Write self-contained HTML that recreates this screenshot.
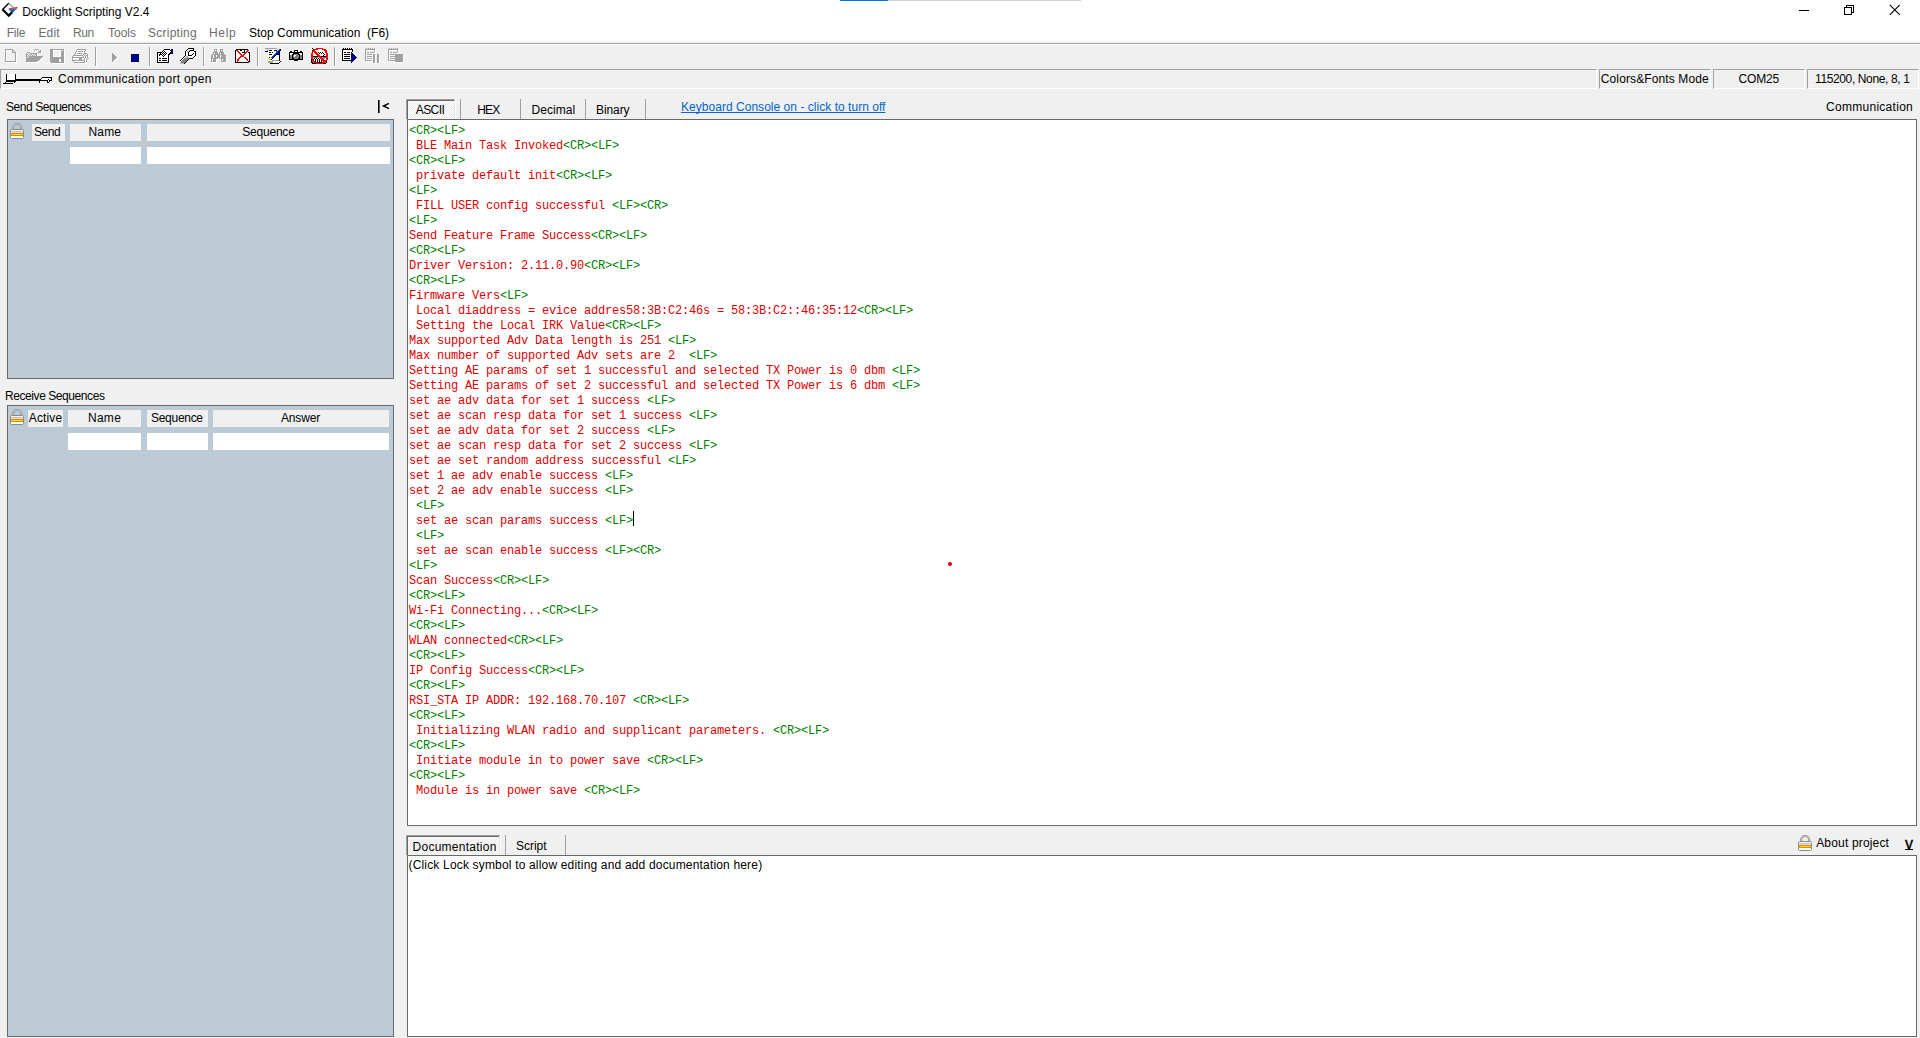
<!DOCTYPE html><html><head><meta charset="utf-8"><style>
*{margin:0;padding:0;box-sizing:border-box}
html,body{width:1920px;height:1038px;overflow:hidden;background:#f0f0f0;font-family:"Liberation Sans",sans-serif;font-size:12px;color:#000}
.a{position:absolute}
.t{position:absolute;white-space:pre;line-height:12px;text-decoration-skip-ink:none}
.menu{color:#6d6d6d}
.sunk{position:absolute;border-top:1px solid #a0a0a0;border-left:1px solid #a0a0a0;border-bottom:1px solid #fff;border-right:1px solid #fff}
.grid{position:absolute;background:#bccad6;border:1px solid #696969}
.hc{position:absolute;background:#f0f0f0}
.wc{position:absolute;background:#fff}
.console{position:absolute;left:409px;top:123.5px;font-family:"Liberation Mono",monospace;font-size:12px;letter-spacing:-0.2px;line-height:15px;white-space:pre}
.g{color:#008000}
.r{color:#e00000}
</style></head><body><div class="a" style="left:0;top:0;width:1920px;height:41px;background:#fff"></div><div class="a" style="left:0;top:41px;width:1920px;height:2px;background:#f3f3f3"></div><div class="a" style="left:0;top:43px;width:1920px;height:1px;background:#a0a0a0"></div><div class="a" style="left:0;top:44px;width:1920px;height:1px;background:#fff"></div><div class="a" style="left:840px;top:0;width:48px;height:1px;background:#0078d7"></div><div class="a" style="left:888px;top:0;width:193px;height:1px;background:#d4d4d4"></div><svg class="a" style="left:0;top:0" width="20" height="18"><path d="M8.7 3.2L2.6 9.5" stroke="#000" stroke-width="1.3" fill="none"/><path d="M2.4 9.3L8.7 15.6L12.2 12.1" stroke="#000" stroke-width="2.2" fill="none"/><path d="M8.7 3.2L13.6 8" stroke="#555" stroke-width="1" fill="none"/><path d="M8.8 8.3L17.8 6.9L16.8 8.8L9 8.9Z" fill="#e21010"/><path d="M8.5 9L16.6 9L12.2 12.9Z" fill="#0a4f9e"/><path d="M8.6 9.2L16.3 9.2" stroke="#3ab4f0" stroke-width="0.8"/></svg><div class="a" style="left:1799px;top:10px;width:10px;height:1px;background:#000"></div><svg class="a" style="left:1844px;top:5px" width="12" height="12" shape-rendering="crispEdges"><path d="M0.5 2.5h7v7h-7z" stroke="#000" fill="none"/><path d="M2.5 2.5v-2h7v7h-2" stroke="#000" fill="none"/></svg><svg class="a" style="left:1889px;top:4px" width="12" height="12"><path d="M0.8 0.8L10.8 10.8M10.8 0.8L0.8 10.8" stroke="#000" stroke-width="1.1" fill="none"/></svg><div class="t" id="title" style="left:22.20px;top:6px;letter-spacing:-0.009px;">Docklight Scripting V2.4</div><div class="t" id="m1" style="left:6.80px;top:27px;letter-spacing:-0.267px;color:#6d6d6d">File</div><div class="t" id="m2" style="left:38.40px;top:27px;letter-spacing:0.200px;color:#6d6d6d">Edit</div><div class="t" id="m3" style="left:73.00px;top:27px;letter-spacing:-0.400px;color:#6d6d6d">Run</div><div class="t" id="m4" style="left:108.00px;top:27px;color:#6d6d6d">Tools</div><div class="t" id="m5" style="left:148.00px;top:27px;letter-spacing:0.250px;color:#6d6d6d">Scripting</div><div class="t" id="m6" style="left:209.00px;top:27px;letter-spacing:0.667px;color:#6d6d6d">Help</div><div class="t" id="m7" style="left:249.00px;top:27px;">Stop Communication  (F6)</div><svg class="a" style="left:5px;top:49px" width="12" height="14" shape-rendering="crispEdges"><path fill="#ffffff" d="M1 1h6v1h-6zM1 2h1v1h-1zM8 2h1v1h-1zM1 3h1v1h-1zM1 4h1v1h-1zM8 4h2v1h-2zM11 4h1v1h-1zM1 5h1v1h-1zM11 5h1v1h-1zM1 6h1v1h-1zM11 6h1v1h-1zM1 7h1v1h-1zM11 7h1v1h-1zM1 8h1v1h-1zM11 8h1v1h-1zM1 9h1v1h-1zM11 9h1v1h-1zM1 10h1v1h-1zM11 10h1v1h-1zM1 11h1v1h-1zM11 11h1v1h-1zM11 12h1v1h-1zM1 13h11v1h-11z"/><path fill="#a0a0a0" d="M0 0h8v1h-8zM0 1h1v1h-1zM7 1h2v1h-2zM0 2h1v1h-1zM7 2h1v1h-1zM9 2h1v1h-1zM0 3h1v1h-1zM7 3h4v1h-4zM0 4h1v1h-1zM10 4h1v1h-1zM0 5h1v1h-1zM10 5h1v1h-1zM0 6h1v1h-1zM10 6h1v1h-1zM0 7h1v1h-1zM10 7h1v1h-1zM0 8h1v1h-1zM10 8h1v1h-1zM0 9h1v1h-1zM10 9h1v1h-1zM0 10h1v1h-1zM10 10h1v1h-1zM0 11h1v1h-1zM10 11h1v1h-1zM0 12h11v1h-11z"/></svg><svg class="a" style="left:26px;top:49px" width="18" height="14" shape-rendering="crispEdges"><path fill="#ffffff" d="M10 1h2v1h-2zM9 2h1v1h-1zM15 2h1v1h-1zM15 3h1v1h-1zM2 4h2v1h-2zM13 4h3v1h-3zM6 5h1v1h-1zM8 5h1v1h-1zM11 5h1v1h-1zM1 6h1v1h-1zM11 6h1v1h-1zM1 8h1v1h-1zM16 8h2v1h-2zM15 9h2v1h-2zM14 10h2v1h-2zM13 11h2v1h-2zM11 12h3v1h-3zM1 13h11v1h-11z"/><path fill="#a0a0a0" d="M9 0h3v1h-3zM8 1h1v1h-1zM12 1h1v1h-1zM14 1h1v1h-1zM13 2h2v1h-2zM1 3h3v1h-3zM12 3h3v1h-3zM0 4h1v1h-1zM4 4h7v1h-7zM0 5h2v1h-2zM3 5h1v1h-1zM5 5h1v1h-1zM7 5h1v1h-1zM9 5h2v1h-2zM0 6h1v1h-1zM2 6h1v1h-1zM4 6h1v1h-1zM6 6h1v1h-1zM8 6h1v1h-1zM10 6h1v1h-1zM0 7h2v1h-2zM3 7h14v1h-14zM0 8h1v1h-1zM2 8h14v1h-14zM0 9h15v1h-15zM0 10h14v1h-14zM0 11h13v1h-13zM0 12h11v1h-11z"/></svg><svg class="a" style="left:50px;top:49px" width="15" height="15" shape-rendering="crispEdges"><path fill="#ffffff" d="M3 1h8v1h-8zM12 1h1v1h-1zM14 1h1v1h-1zM3 2h1v1h-1zM10 2h1v1h-1zM14 2h1v1h-1zM3 3h1v1h-1zM10 3h1v1h-1zM14 3h1v1h-1zM3 4h1v1h-1zM10 4h1v1h-1zM14 4h1v1h-1zM3 5h1v1h-1zM10 5h1v1h-1zM14 5h1v1h-1zM3 6h1v1h-1zM10 6h1v1h-1zM14 6h1v1h-1zM3 7h8v1h-8zM14 7h1v1h-1zM14 8h1v1h-1zM14 9h1v1h-1zM9 10h2v1h-2zM14 10h1v1h-1zM9 11h2v1h-2zM14 11h1v1h-1zM9 12h2v1h-2zM14 12h1v1h-1zM14 13h1v1h-1zM2 14h13v1h-13z"/><path fill="#a0a0a0" d="M0 0h14v1h-14zM0 1h3v1h-3zM11 1h1v1h-1zM13 1h1v1h-1zM0 2h3v1h-3zM11 2h3v1h-3zM0 3h3v1h-3zM11 3h3v1h-3zM0 4h3v1h-3zM11 4h3v1h-3zM0 5h3v1h-3zM11 5h3v1h-3zM0 6h3v1h-3zM11 6h3v1h-3zM0 7h3v1h-3zM11 7h3v1h-3zM0 8h14v1h-14zM0 9h14v1h-14zM0 10h9v1h-9zM11 10h3v1h-3zM0 11h9v1h-9zM11 11h3v1h-3zM0 12h9v1h-9zM11 12h3v1h-3zM1 13h13v1h-13z"/></svg><svg class="a" style="left:72px;top:49px" width="18" height="15" shape-rendering="crispEdges"><path fill="#ffffff" d="M6 1h7v1h-7zM14 1h1v1h-1zM5 2h1v1h-1zM14 2h1v1h-1zM5 3h1v1h-1zM7 3h5v1h-5zM13 3h1v1h-1zM4 4h1v1h-1zM4 5h1v1h-1zM6 5h5v1h-5zM14 5h1v1h-1zM16 6h1v1h-1zM2 7h9v1h-9zM16 7h1v1h-1zM12 8h1v1h-1zM14 8h1v1h-1zM16 8h1v1h-1zM1 9h6v1h-6zM10 9h2v1h-2zM1 10h1v1h-1zM10 10h1v1h-1zM13 10h1v1h-1zM17 10h1v1h-1zM13 11h1v1h-1zM16 11h1v1h-1zM2 12h10v1h-10zM13 12h1v1h-1zM15 12h1v1h-1zM13 13h1v1h-1zM15 13h1v1h-1zM3 14h11v1h-11z"/><path fill="#a0a0a0" d="M5 0h9v1h-9zM4 1h1v1h-1zM13 1h1v1h-1zM4 2h1v1h-1zM6 2h5v1h-5zM12 2h1v1h-1zM3 3h1v1h-1zM12 3h1v1h-1zM3 4h1v1h-1zM5 4h5v1h-5zM12 4h3v1h-3zM2 5h1v1h-1zM11 5h1v1h-1zM13 5h1v1h-1zM15 5h1v1h-1zM1 6h10v1h-10zM12 6h1v1h-1zM14 6h2v1h-2zM0 7h1v1h-1zM11 7h1v1h-1zM13 7h1v1h-1zM15 7h1v1h-1zM0 8h12v1h-12zM13 8h1v1h-1zM15 8h1v1h-1zM0 9h1v1h-1zM7 9h3v1h-3zM12 9h1v1h-1zM14 9h1v1h-1zM16 9h1v1h-1zM0 10h1v1h-1zM7 10h3v1h-3zM12 10h1v1h-1zM15 10h1v1h-1zM0 11h13v1h-13zM14 11h1v1h-1zM1 12h1v1h-1zM12 12h1v1h-1zM14 12h1v1h-1zM2 13h11v1h-11z"/></svg><div class="a" style="left:95px;top:47px;width:1px;height:19px;background:#a0a0a0"></div><div class="a" style="left:96px;top:47px;width:1px;height:19px;background:#fff"></div><div class="a" style="left:149px;top:47px;width:1px;height:19px;background:#a0a0a0"></div><div class="a" style="left:150px;top:47px;width:1px;height:19px;background:#fff"></div><div class="a" style="left:203px;top:47px;width:1px;height:19px;background:#a0a0a0"></div><div class="a" style="left:204px;top:47px;width:1px;height:19px;background:#fff"></div><div class="a" style="left:257px;top:47px;width:1px;height:19px;background:#a0a0a0"></div><div class="a" style="left:258px;top:47px;width:1px;height:19px;background:#fff"></div><div class="a" style="left:334px;top:47px;width:1px;height:19px;background:#a0a0a0"></div><div class="a" style="left:335px;top:47px;width:1px;height:19px;background:#fff"></div><svg class="a" style="left:112px;top:53px" width="6" height="10" shape-rendering="crispEdges"><path fill="#ffffff" d="M4 5h2v1h-2zM3 6h2v1h-2zM2 7h2v1h-2zM1 8h2v1h-2zM1 9h1v1h-1z"/><path fill="#a0a0a0" d="M0 0h1v1h-1zM0 1h2v1h-2zM0 2h3v1h-3zM0 3h4v1h-4zM0 4h5v1h-5zM0 5h4v1h-4zM0 6h3v1h-3zM0 7h2v1h-2zM0 8h1v1h-1z"/></svg><div class="a" style="left:131px;top:54px;width:8px;height:8px;background:#000080"></div><svg class="a" style="left:157px;top:49px" width="17" height="15" shape-rendering="crispEdges"><path fill="#ffffff" d="M7 1h6v1h-6zM6 2h1v1h-1zM8 2h6v1h-6zM5 3h1v1h-1zM7 3h1v1h-1zM9 3h4v1h-4zM1 4h2v1h-2zM4 4h1v1h-1zM6 4h1v1h-1zM8 4h1v1h-1zM10 4h2v1h-2zM1 5h1v1h-1zM5 5h1v1h-1zM7 5h1v1h-1zM9 5h2v1h-2zM1 6h1v1h-1zM3 6h2v1h-2zM6 6h1v1h-1zM8 6h3v1h-3zM1 7h5v1h-5zM7 7h4v1h-4zM1 8h10v1h-10zM1 9h1v1h-1zM4 9h1v1h-1zM10 9h1v1h-1zM1 10h10v1h-10zM1 11h1v1h-1zM4 11h1v1h-1zM10 11h1v1h-1zM1 12h10v1h-10z"/><path fill="#000000" d="M7 0h6v1h-6zM6 1h1v1h-1zM13 1h1v1h-1zM5 2h1v1h-1zM7 2h1v1h-1zM0 3h5v1h-5zM6 3h1v1h-1zM8 3h1v1h-1zM13 3h1v1h-1zM0 4h1v1h-1zM3 4h1v1h-1zM5 4h1v1h-1zM7 4h1v1h-1zM9 4h1v1h-1zM12 4h2v1h-2zM0 5h1v1h-1zM2 5h3v1h-3zM6 5h1v1h-1zM8 5h1v1h-1zM11 5h2v1h-2zM0 6h1v1h-1zM2 6h1v1h-1zM5 6h1v1h-1zM7 6h1v1h-1zM11 6h1v1h-1zM0 7h1v1h-1zM6 7h1v1h-1zM11 7h1v1h-1zM0 8h1v1h-1zM11 8h1v1h-1zM0 9h1v1h-1zM2 9h2v1h-2zM5 9h5v1h-5zM11 9h1v1h-1zM0 10h1v1h-1zM11 10h1v1h-1zM0 11h1v1h-1zM2 11h2v1h-2zM5 11h5v1h-5zM11 11h1v1h-1zM0 12h1v1h-1zM11 12h1v1h-1zM0 13h12v1h-12z"/><path fill="#000080" d="M14 0h2v1h-2zM14 1h2v1h-2zM14 2h2v1h-2zM14 3h2v1h-2zM14 4h2v1h-2z"/></svg><svg class="a" style="left:179px;top:48px" width="18" height="17" shape-rendering="crispEdges"><path fill="#ffffff" d="M9 1h5v1h-5zM8 2h1v1h-1zM7 3h1v1h-1zM11 3h4v1h-4zM7 4h1v1h-1zM10 4h6v1h-6zM7 5h2v1h-2zM10 5h4v1h-4zM15 5h1v1h-1zM7 6h2v1h-2zM10 6h3v1h-3zM14 6h2v1h-2zM7 7h2v1h-2zM13 7h3v1h-3zM6 8h1v1h-1zM9 8h6v1h-6zM5 9h1v1h-1zM10 9h4v1h-4zM4 10h1v1h-1zM3 11h1v1h-1zM2 12h1v1h-1zM1 13h1v1h-1zM0 14h1v1h-1z"/><path fill="#000000" d="M9 0h6v1h-6zM8 1h1v1h-1zM14 1h1v1h-1zM7 2h1v1h-1zM11 2h4v1h-4zM6 3h1v1h-1zM10 3h1v1h-1zM15 3h2v1h-2zM6 4h1v1h-1zM9 4h1v1h-1zM16 4h1v1h-1zM6 5h1v1h-1zM9 5h1v1h-1zM14 5h1v1h-1zM16 5h1v1h-1zM6 6h1v1h-1zM9 6h1v1h-1zM13 6h1v1h-1zM16 6h1v1h-1zM6 7h1v1h-1zM9 7h4v1h-4zM16 7h1v1h-1zM5 8h1v1h-1zM15 8h1v1h-1zM4 9h1v1h-1zM14 9h1v1h-1zM3 10h1v1h-1zM10 10h4v1h-4zM2 11h1v1h-1zM9 11h1v1h-1zM1 12h1v1h-1zM8 12h1v1h-1zM7 13h1v1h-1zM6 14h1v1h-1zM5 15h1v1h-1z"/><path fill="#c0c0c0" d="M9 2h2v1h-2zM8 3h2v1h-2zM8 4h1v1h-1zM7 8h2v1h-2zM6 9h2v1h-2zM9 9h1v1h-1zM1 14h1v1h-1zM1 15h4v1h-4z"/><path fill="#808080" d="M8 9h1v1h-1zM5 10h5v1h-5zM4 11h5v1h-5zM3 12h5v1h-5zM2 13h5v1h-5zM2 14h4v1h-4z"/></svg><svg class="a" style="left:211px;top:49px" width="16" height="14" shape-rendering="crispEdges"><path fill="#ffffff" d="M4 1h1v1h-1zM6 1h1v1h-1zM10 1h1v1h-1zM12 1h1v1h-1zM6 2h1v1h-1zM12 2h1v1h-1zM3 4h1v1h-1zM7 4h1v1h-1zM9 4h1v1h-1zM13 4h1v1h-1zM2 7h1v1h-1zM5 7h1v1h-1zM9 7h1v1h-1zM15 7h1v1h-1zM2 8h1v1h-1zM9 8h1v1h-1zM15 8h1v1h-1zM7 9h1v1h-1zM15 9h1v1h-1zM1 10h1v1h-1zM5 10h3v1h-3zM9 10h1v1h-1zM11 10h1v1h-1zM15 10h1v1h-1zM1 11h1v1h-1zM5 11h1v1h-1zM11 11h1v1h-1zM15 11h1v1h-1zM5 12h1v1h-1zM15 12h1v1h-1zM1 13h5v1h-5zM11 13h5v1h-5zM2 6h1v1h-1zM5 6h1v1h-1zM9 6h1v1h-1z"/><path fill="#a0a0a0" d="M3 0h3v1h-3zM9 0h3v1h-3zM3 1h1v1h-1zM5 1h1v1h-1zM9 1h1v1h-1zM11 1h1v1h-1zM3 2h3v1h-3zM9 2h3v1h-3zM2 3h5v1h-5zM8 3h5v1h-5zM2 4h1v1h-1zM4 4h3v1h-3zM8 4h1v1h-1zM10 4h3v1h-3zM1 5h13v1h-13zM0 6h2v1h-2zM3 6h2v1h-2zM6 6h3v1h-3zM10 6h5v1h-5zM0 7h2v1h-2zM3 7h2v1h-2zM6 7h3v1h-3zM10 7h5v1h-5zM0 8h2v1h-2zM3 8h6v1h-6zM10 8h5v1h-5zM0 9h7v1h-7zM8 9h7v1h-7zM0 10h1v1h-1zM2 10h3v1h-3zM10 10h1v1h-1zM12 10h3v1h-3zM0 11h1v1h-1zM2 11h3v1h-3zM10 11h1v1h-1zM12 11h3v1h-3zM0 12h5v1h-5zM10 12h5v1h-5z"/></svg><svg class="a" style="left:235px;top:49px" width="16" height="15" shape-rendering="crispEdges"><path fill="#ffffff" d="M3 1h2v1h-2zM7 1h2v1h-2zM10 1h2v1h-2zM1 2h1v1h-1zM4 2h5v1h-5zM10 2h1v1h-1zM13 2h1v1h-1zM1 3h2v1h-2zM5 3h2v1h-2zM12 3h1v1h-1zM1 4h3v1h-3zM6 4h3v1h-3zM11 4h3v1h-3zM1 5h4v1h-4zM7 5h1v1h-1zM10 5h4v1h-4zM1 6h5v1h-5zM9 6h5v1h-5zM1 7h4v1h-4zM9 7h5v1h-5zM1 8h3v1h-3zM6 8h3v1h-3zM11 8h3v1h-3zM1 9h2v1h-2zM5 9h5v1h-5zM12 9h2v1h-2zM1 10h1v1h-1zM4 10h7v1h-7zM13 10h1v1h-1zM1 11h1v1h-1zM4 11h8v1h-8zM13 11h1v1h-1zM1 12h1v1h-1zM3 12h10v1h-10z"/><path fill="#000000" d="M1 0h12v1h-12zM0 1h1v1h-1zM5 1h2v1h-2zM9 1h1v1h-1zM0 2h1v1h-1zM9 2h1v1h-1zM0 3h1v1h-1zM7 3h3v1h-3zM13 3h2v1h-2zM0 4h1v1h-1zM14 4h1v1h-1zM0 5h1v1h-1zM14 5h1v1h-1zM0 6h1v1h-1zM14 6h1v1h-1zM0 7h1v1h-1zM14 7h1v1h-1zM0 8h1v1h-1zM14 8h1v1h-1zM0 9h1v1h-1zM14 9h1v1h-1zM0 10h1v1h-1zM14 10h1v1h-1zM0 11h1v1h-1zM14 11h1v1h-1zM0 12h1v1h-1zM13 12h2v1h-2zM0 13h13v1h-13z"/><path fill="#ff0000" d="M1 1h2v1h-2zM12 1h2v1h-2zM2 2h2v1h-2zM11 2h2v1h-2zM3 3h2v1h-2zM10 3h2v1h-2zM4 4h2v1h-2zM9 4h2v1h-2zM5 5h2v1h-2zM8 5h2v1h-2zM6 6h3v1h-3zM5 7h4v1h-4zM4 8h2v1h-2zM9 8h2v1h-2zM3 9h2v1h-2zM10 9h2v1h-2zM2 10h2v1h-2zM11 10h2v1h-2zM2 11h2v1h-2zM12 11h1v1h-1zM2 12h1v1h-1zM13 13h1v1h-1z"/></svg><svg class="a" style="left:264px;top:48px" width="19" height="17" shape-rendering="crispEdges"><path fill="#ffffff" d="M5 1h8v1h-8zM8 2h2v1h-2zM13 2h1v1h-1zM4 3h8v1h-8zM4 4h1v1h-1zM7 4h1v1h-1zM9 4h3v1h-3zM4 5h7v1h-7zM4 6h1v1h-1zM8 6h2v1h-2zM4 7h5v1h-5zM12 7h3v1h-3zM4 8h4v1h-4zM11 8h4v1h-4zM4 9h1v1h-1zM6 9h1v1h-1zM10 9h5v1h-5zM4 10h2v1h-2zM9 10h6v1h-6zM4 11h1v1h-1zM8 11h7v1h-7zM4 12h4v1h-4zM9 13h7v1h-7zM9 14h6v1h-6z"/><path fill="#a0a0a0" d="M1 0h12v1h-12zM3 1h1v1h-1zM13 1h1v1h-1zM3 2h1v1h-1zM8 12h7v1h-7zM4 13h5v1h-5zM4 14h5v1h-5z"/><path fill="#008080" d="M15 1h1v1h-1zM14 2h1v1h-1zM12 3h1v1h-1zM12 4h1v1h-1zM11 5h1v1h-1zM10 6h1v1h-1zM9 7h1v1h-1zM8 8h1v1h-1zM7 9h1v1h-1z"/><path fill="#000000" d="M16 1h1v1h-1zM5 2h3v1h-3zM10 2h3v1h-3zM16 2h1v1h-1zM1 3h3v1h-3zM15 3h1v1h-1zM5 4h2v1h-2zM8 4h1v1h-1zM15 4h1v1h-1zM14 5h2v1h-2zM5 6h3v1h-3zM12 6h4v1h-4zM11 7h1v1h-1zM15 7h1v1h-1zM10 8h1v1h-1zM15 8h1v1h-1zM5 9h1v1h-1zM9 9h1v1h-1zM15 9h1v1h-1zM8 10h1v1h-1zM15 10h1v1h-1zM7 11h1v1h-1zM15 11h1v1h-1zM15 12h1v1h-1zM16 13h1v1h-1zM15 14h1v1h-1zM6 15h9v1h-9z"/><path fill="#0000ff" d="M15 2h1v1h-1zM13 3h2v1h-2zM13 4h2v1h-2zM12 5h2v1h-2zM11 6h1v1h-1zM10 7h1v1h-1zM9 8h1v1h-1zM8 9h1v1h-1z"/><path fill="#ffff00" d="M6 10h2v1h-2z"/><path fill="#c0c000" d="M5 11h2v1h-2z"/></svg><svg class="a" style="left:289px;top:50px" width="15" height="12" shape-rendering="crispEdges"><path fill="#ffffff" d="M6 1h2v1h-2zM1 3h3v1h-3zM10 3h3v1h-3zM1 4h2v1h-2zM11 4h2v1h-2zM5 5h2v1h-2zM5 6h1v1h-1z"/><path fill="#000000" d="M5 0h4v1h-4zM1 1h2v1h-2zM5 1h1v1h-1zM8 1h1v1h-1zM11 1h2v1h-2zM0 2h14v1h-14zM0 3h1v1h-1zM4 3h6v1h-6zM13 3h1v1h-1zM0 4h1v1h-1zM3 4h2v1h-2zM9 4h2v1h-2zM13 4h1v1h-1zM0 5h1v1h-1zM3 5h1v1h-1zM10 5h1v1h-1zM13 5h1v1h-1zM0 6h1v1h-1zM3 6h1v1h-1zM10 6h1v1h-1zM13 6h1v1h-1zM0 7h1v1h-1zM3 7h1v1h-1zM10 7h1v1h-1zM13 7h1v1h-1zM0 8h1v1h-1zM3 8h2v1h-2zM9 8h2v1h-2zM13 8h1v1h-1zM0 9h14v1h-14zM5 10h4v1h-4z"/><path fill="#808080" d="M5 4h4v1h-4zM1 5h2v1h-2zM4 5h1v1h-1zM7 5h3v1h-3zM11 5h2v1h-2zM1 6h2v1h-2zM4 6h1v1h-1zM6 6h4v1h-4zM11 6h2v1h-2zM1 7h2v1h-2zM4 7h6v1h-6zM11 7h2v1h-2zM1 8h2v1h-2zM5 8h4v1h-4zM11 8h2v1h-2z"/></svg><svg class="a" style="left:311px;top:48px" width="18" height="17" shape-rendering="crispEdges"><path fill="#ffffff" d="M7 1h4v1h-4zM4 2h9v1h-9zM5 3h9v1h-9zM2 4h1v1h-1zM6 4h1v1h-1zM8 4h1v1h-1zM10 4h1v1h-1zM12 4h2v1h-2zM2 5h2v1h-2zM7 5h1v1h-1zM9 5h1v1h-1zM11 5h1v1h-1zM13 5h2v1h-2zM2 6h3v1h-3zM8 6h5v1h-5zM14 6h1v1h-1zM2 7h4v1h-4zM9 7h3v1h-3zM13 7h2v1h-2zM7 9h1v1h-1zM2 10h1v1h-1zM4 10h1v1h-1zM6 10h1v1h-1zM8 10h1v1h-1zM14 10h1v1h-1zM3 11h1v1h-1zM5 11h1v1h-1zM7 11h1v1h-1zM9 11h1v1h-1zM13 11h2v1h-2zM3 12h1v1h-1zM5 12h1v1h-1zM7 12h1v1h-1zM9 12h1v1h-1zM5 13h1v1h-1zM7 13h1v1h-1zM9 13h1v1h-1zM11 13h1v1h-1z"/><path fill="#000000" d="M1 0h1v1h-1zM2 1h1v1h-1zM1 2h1v1h-1zM7 4h1v1h-1zM9 4h1v1h-1zM11 4h1v1h-1zM8 5h1v1h-1zM10 5h1v1h-1zM12 5h1v1h-1zM13 6h1v1h-1zM12 7h1v1h-1zM2 8h5v1h-5zM10 8h5v1h-5zM3 10h1v1h-1zM5 10h1v1h-1zM7 10h1v1h-1zM0 11h1v1h-1zM2 11h1v1h-1zM4 11h1v1h-1zM6 11h1v1h-1zM8 11h1v1h-1zM0 12h1v1h-1zM4 12h1v1h-1zM6 12h1v1h-1zM8 12h1v1h-1zM10 12h1v1h-1zM0 13h1v1h-1zM4 13h1v1h-1zM6 13h1v1h-1zM8 13h1v1h-1zM10 13h1v1h-1zM15 13h1v1h-1zM0 14h2v1h-2zM6 14h5v1h-5zM15 14h1v1h-1zM1 15h4v1h-4zM12 15h3v1h-3z"/><path fill="#ff0000" d="M5 0h7v1h-7zM3 1h4v1h-4zM11 1h4v1h-4zM2 2h2v1h-2zM13 2h3v1h-3zM1 3h4v1h-4zM14 3h2v1h-2zM1 4h1v1h-1zM3 4h3v1h-3zM14 4h2v1h-2zM0 5h2v1h-2zM4 5h3v1h-3zM15 5h2v1h-2zM0 6h2v1h-2zM5 6h3v1h-3zM15 6h2v1h-2zM0 7h2v1h-2zM6 7h3v1h-3zM15 7h2v1h-2zM0 8h2v1h-2zM7 8h3v1h-3zM15 8h2v1h-2zM0 9h2v1h-2zM8 9h3v1h-3zM15 9h2v1h-2zM0 10h2v1h-2zM9 10h3v1h-3zM15 10h2v1h-2zM1 11h1v1h-1zM10 11h3v1h-3zM15 11h2v1h-2zM1 12h2v1h-2zM11 12h5v1h-5zM2 13h2v1h-2zM12 13h3v1h-3zM3 14h3v1h-3zM11 14h3v1h-3zM5 15h7v1h-7z"/><path fill="#808080" d="M2 9h5v1h-5zM11 9h4v1h-4zM12 10h2v1h-2zM1 13h1v1h-1zM2 14h1v1h-1zM14 14h1v1h-1z"/></svg><svg class="a" style="left:342px;top:48px" width="18" height="16" shape-rendering="crispEdges"><path fill="#ffffff" d="M1 2h9v1h-9zM1 3h9v1h-9zM1 4h1v1h-1zM4 4h1v1h-1zM8 4h1v1h-1zM10 4h1v1h-1zM1 5h8v1h-8zM11 5h1v1h-1zM1 6h1v1h-1zM8 6h1v1h-1zM12 6h1v1h-1zM1 7h8v1h-8zM13 7h1v1h-1zM1 8h1v1h-1zM8 8h1v1h-1zM14 8h1v1h-1zM1 9h8v1h-8zM15 9h1v1h-1zM1 10h1v1h-1zM8 10h1v1h-1zM14 10h1v1h-1zM1 11h8v1h-8zM13 11h1v1h-1zM12 12h1v1h-1zM11 13h1v1h-1zM10 14h1v1h-1z"/><path fill="#000000" d="M1 0h1v1h-1zM3 0h1v1h-1zM5 0h1v1h-1zM7 0h1v1h-1zM9 0h1v1h-1zM0 1h11v1h-11zM0 2h1v1h-1zM10 2h1v1h-1zM0 3h1v1h-1zM10 3h1v1h-1zM0 4h1v1h-1zM2 4h2v1h-2zM5 4h3v1h-3zM0 5h1v1h-1zM0 6h1v1h-1zM2 6h6v1h-6zM0 7h1v1h-1zM0 8h1v1h-1zM2 8h6v1h-6zM0 9h1v1h-1zM0 10h1v1h-1zM2 10h6v1h-6zM0 11h1v1h-1zM0 12h9v1h-9z"/><path fill="#000080" d="M9 4h1v1h-1zM9 5h2v1h-2zM9 6h3v1h-3zM9 7h4v1h-4zM9 8h5v1h-5zM9 9h6v1h-6zM9 10h5v1h-5zM9 11h4v1h-4zM9 12h3v1h-3zM9 13h2v1h-2zM9 14h1v1h-1z"/></svg><svg class="a" style="left:365px;top:48px" width="15" height="16" shape-rendering="crispEdges"><path fill="#ffffff" d="M10 1h1v1h-1zM1 2h8v1h-8zM10 2h1v1h-1zM1 3h1v1h-1zM10 3h1v1h-1zM1 4h1v1h-1zM10 4h1v1h-1zM1 5h1v1h-1zM3 5h2v1h-2zM6 5h4v1h-4zM1 6h1v1h-1zM1 7h1v1h-1zM3 7h5v1h-5zM10 7h1v1h-1zM14 7h1v1h-1zM1 8h1v1h-1zM10 8h1v1h-1zM14 8h1v1h-1zM1 9h1v1h-1zM3 9h5v1h-5zM10 9h1v1h-1zM14 9h1v1h-1zM1 10h1v1h-1zM10 10h1v1h-1zM14 10h1v1h-1zM1 11h1v1h-1zM3 11h5v1h-5zM10 11h1v1h-1zM14 11h1v1h-1zM10 12h1v1h-1zM14 12h1v1h-1zM1 13h7v1h-7zM10 13h1v1h-1zM14 13h1v1h-1zM10 14h1v1h-1zM14 14h1v1h-1zM9 15h2v1h-2zM13 15h2v1h-2z"/><path fill="#a0a0a0" d="M1 0h1v1h-1zM3 0h1v1h-1zM5 0h1v1h-1zM7 0h1v1h-1zM9 0h1v1h-1zM0 1h10v1h-10zM0 2h1v1h-1zM9 2h1v1h-1zM0 3h1v1h-1zM9 3h1v1h-1zM0 4h1v1h-1zM2 4h2v1h-2zM5 4h4v1h-4zM0 5h1v1h-1zM0 6h1v1h-1zM2 6h5v1h-5zM8 6h2v1h-2zM12 6h2v1h-2zM0 7h1v1h-1zM8 7h2v1h-2zM12 7h2v1h-2zM0 8h1v1h-1zM2 8h5v1h-5zM8 8h2v1h-2zM12 8h2v1h-2zM0 9h1v1h-1zM8 9h2v1h-2zM12 9h2v1h-2zM0 10h1v1h-1zM2 10h5v1h-5zM8 10h2v1h-2zM12 10h2v1h-2zM0 11h1v1h-1zM8 11h2v1h-2zM12 11h2v1h-2zM0 12h7v1h-7zM8 12h2v1h-2zM12 12h2v1h-2zM8 13h2v1h-2zM12 13h2v1h-2zM8 14h2v1h-2zM12 14h2v1h-2z"/></svg><svg class="a" style="left:388px;top:48px" width="16" height="15" shape-rendering="crispEdges"><path fill="#ffffff" d="M10 1h1v1h-1zM1 2h8v1h-8zM10 2h1v1h-1zM1 3h1v1h-1zM10 3h1v1h-1zM1 4h1v1h-1zM10 4h1v1h-1zM1 5h1v1h-1zM3 5h2v1h-2zM6 5h4v1h-4zM1 6h1v1h-1zM1 7h1v1h-1zM3 7h4v1h-4zM15 7h1v1h-1zM1 8h1v1h-1zM15 8h1v1h-1zM1 9h1v1h-1zM3 9h4v1h-4zM15 9h1v1h-1zM1 10h1v1h-1zM15 10h1v1h-1zM1 11h1v1h-1zM3 11h4v1h-4zM15 11h1v1h-1zM15 12h1v1h-1zM1 13h6v1h-6zM15 13h1v1h-1zM8 14h8v1h-8z"/><path fill="#a0a0a0" d="M1 0h1v1h-1zM3 0h1v1h-1zM5 0h1v1h-1zM7 0h1v1h-1zM9 0h1v1h-1zM0 1h10v1h-10zM0 2h1v1h-1zM9 2h1v1h-1zM0 3h1v1h-1zM9 3h1v1h-1zM0 4h1v1h-1zM2 4h2v1h-2zM5 4h4v1h-4zM0 5h1v1h-1zM0 6h1v1h-1zM2 6h13v1h-13zM0 7h1v1h-1zM7 7h8v1h-8zM0 8h1v1h-1zM2 8h13v1h-13zM0 9h1v1h-1zM7 9h8v1h-8zM0 10h1v1h-1zM2 10h13v1h-13zM0 11h1v1h-1zM7 11h8v1h-8zM0 12h15v1h-15zM7 13h8v1h-8z"/></svg><div class="sunk" style="left:0;top:69px;width:1597px;height:20px"></div><div class="sunk" style="left:1599px;top:69px;width:112px;height:20px"></div><div class="sunk" style="left:1713px;top:69px;width:92px;height:20px"></div><div class="sunk" style="left:1807px;top:69px;width:112px;height:20px"></div><svg class="a" style="left:3px;top:74px" width="50" height="11" shape-rendering="crispEdges"><path fill="#ffffff" d="M4 0h8v1h-8zM4 1h8v1h-8zM4 2h8v1h-8zM4 3h8v1h-8zM4 4h8v1h-8zM39 4h9v1h-9zM4 5h8v1h-8zM38 5h7v1h-7zM46 5h2v1h-2zM45 6h1v1h-1zM45 7h1v1h-1z"/><path fill="#000000" d="M3 0h1v1h-1zM12 0h1v1h-1zM3 1h1v1h-1zM12 1h1v1h-1zM3 2h1v1h-1zM12 2h1v1h-1zM3 3h1v1h-1zM12 3h1v1h-1zM39 3h10v1h-10zM3 4h1v1h-1zM12 4h1v1h-1zM38 4h1v1h-1zM48 4h1v1h-1zM3 5h1v1h-1zM12 5h26v1h-26zM45 5h1v1h-1zM48 5h1v1h-1zM3 6h42v1h-42zM46 6h3v1h-3zM3 7h10v1h-10zM36 7h1v1h-1zM44 7h1v1h-1zM46 7h1v1h-1zM2 8h1v1h-1zM11 8h1v1h-1zM36 8h1v1h-1zM44 8h2v1h-2zM0 9h10v1h-10z"/></svg><div class="t" id="port" style="left:58.00px;top:73px;letter-spacing:0.261px;">Commmunication port open</div><div class="t" id="colors" style="left:1600.80px;top:73px;letter-spacing:0.113px;">Colors&amp;Fonts Mode</div><div class="t" id="com" style="left:1738.60px;top:73px;letter-spacing:-0.200px;">COM25</div><div class="t" id="baud" style="left:1815.00px;top:73px;letter-spacing:-0.376px;">115200, None, 8, 1</div><div class="t" id="sendseq" style="left:6.00px;top:101px;letter-spacing:-0.446px;">Send Sequences</div><svg class="a" style="left:376px;top:98px" width="16" height="18"><rect x="2" y="2" width="1.6" height="13" fill="#000"/><path d="M13 5.3L7.4 8L13 10.7" stroke="#000" stroke-width="1.45" fill="none"/></svg><div class="grid" style="left:7px;top:119px;width:387px;height:260px"></div><div class="hc" style="left:32px;top:124px;width:33px;height:17px"></div><div class="hc" style="left:70px;top:124px;width:71px;height:17px"></div><div class="hc" style="left:147px;top:124px;width:243px;height:17px"></div><div class="wc" style="left:70px;top:147px;width:71px;height:17px"></div><div class="wc" style="left:147px;top:147px;width:243px;height:17px"></div><svg class="a" style="left:10px;top:123px" width="15" height="17"><path d="M3.15 7V5a4 4 0 0 1 8 0V7" stroke="#8e8e8e" stroke-width="2.2" fill="none"/><path d="M3.15 7V5a4 4 0 0 1 8 0V7" stroke="#d4d4d4" stroke-width="0.8" fill="none"/><rect x="0.5" y="6.5" width="13" height="9" rx="1.2" fill="#f6f4dc" stroke="#8c8c8c"/><rect x="1.5" y="8" width="11" height="1.5" fill="#c4c4c4"/><rect x="1" y="10" width="12" height="3" fill="#e48a10"/><rect x="1.5" y="11" width="11" height="1" fill="#f8dc10"/><rect x="1" y="13" width="12" height="2" fill="#fbfbf6"/></svg><div class="t" id="hsend" style="left:34.00px;top:126px;letter-spacing:-0.467px;">Send</div><div class="t" id="hname1" style="left:88.40px;top:126px;letter-spacing:0.200px;">Name</div><div class="t" id="hseq1" style="left:242.20px;top:126px;letter-spacing:-0.200px;">Sequence</div><div class="t" id="recvseq" style="left:5.00px;top:390px;letter-spacing:-0.425px;">Receive Sequences</div><div class="grid" style="left:7px;top:405px;width:387px;height:632px"></div><div class="hc" style="left:28px;top:410px;width:35px;height:17px"></div><div class="hc" style="left:68px;top:410px;width:73px;height:17px"></div><div class="hc" style="left:147px;top:410px;width:61px;height:17px"></div><div class="hc" style="left:213px;top:410px;width:176px;height:17px"></div><div class="wc" style="left:68px;top:433px;width:73px;height:17px"></div><div class="wc" style="left:147px;top:433px;width:61px;height:17px"></div><div class="wc" style="left:213px;top:433px;width:176px;height:17px"></div><svg class="a" style="left:10px;top:409px" width="15" height="17"><path d="M3.15 7V5a4 4 0 0 1 8 0V7" stroke="#8e8e8e" stroke-width="2.2" fill="none"/><path d="M3.15 7V5a4 4 0 0 1 8 0V7" stroke="#d4d4d4" stroke-width="0.8" fill="none"/><rect x="0.5" y="6.5" width="13" height="9" rx="1.2" fill="#f6f4dc" stroke="#8c8c8c"/><rect x="1.5" y="8" width="11" height="1.5" fill="#c4c4c4"/><rect x="1" y="10" width="12" height="3" fill="#e48a10"/><rect x="1.5" y="11" width="11" height="1" fill="#f8dc10"/><rect x="1" y="13" width="12" height="2" fill="#fbfbf6"/></svg><div class="t" id="hactive" style="left:28.80px;top:412px;letter-spacing:0.120px;">Active</div><div class="t" id="hname2" style="left:88.00px;top:412px;letter-spacing:0.267px;">Name</div><div class="t" id="hseq2" style="left:151.00px;top:412px;letter-spacing:-0.286px;">Sequence</div><div class="t" id="hans" style="left:281.00px;top:412px;letter-spacing:-0.160px;">Answer</div><div class="a" style="left:407px;top:119px;width:1510px;height:707px;background:#fff;border:1px solid #696969"></div><div class="a" style="left:406px;top:99px;width:49px;height:20px;background:#a0a0a0"></div><div class="a" style="left:407px;top:100px;width:48px;height:19px;background:#696969"></div><div class="a" style="left:455px;top:99px;width:1px;height:20px;background:#fff"></div><div class="a" style="left:454px;top:100px;width:1px;height:19px;background:#e3e3e3"></div><div class="a" style="left:408px;top:101px;width:46px;height:18px;background:repeating-conic-gradient(#fff 0 25%,#ebebeb 0 50%) 0 0/2px 2px"></div><div class="a" style="left:460px;top:99px;width:1px;height:20px;background:#a0a0a0"></div><div class="a" style="left:520px;top:99px;width:1px;height:20px;background:#a0a0a0"></div><div class="a" style="left:585px;top:99px;width:1px;height:20px;background:#a0a0a0"></div><div class="a" style="left:645px;top:99px;width:1px;height:20px;background:#a0a0a0"></div><div class="t" id="ascii" style="left:415.80px;top:104px;letter-spacing:-0.600px;">ASCII</div><div class="t" id="hex" style="left:477.20px;top:104px;letter-spacing:-0.800px;">HEX</div><div class="t" id="dec" style="left:531.60px;top:104px;letter-spacing:0.033px;">Decimal</div><div class="t" id="bin" style="left:596.00px;top:104px;letter-spacing:-0.080px;">Binary</div><div class="t" id="link" style="left:681.00px;top:101px;letter-spacing:0.032px;color:#0066cc;text-decoration:underline">Keyboard Console on - click to turn off</div><div class="t" id="comm" style="left:1826.00px;top:101px;letter-spacing:0.283px;">Communication</div><div class="console"><span class="g">&lt;CR&gt;&lt;LF&gt;</span>
<span class="r"> BLE Main Task Invoked</span><span class="g">&lt;CR&gt;&lt;LF&gt;</span>
<span class="g">&lt;CR&gt;&lt;LF&gt;</span>
<span class="r"> private default init</span><span class="g">&lt;CR&gt;&lt;LF&gt;</span>
<span class="g">&lt;LF&gt;</span>
<span class="r"> FILL USER config successful </span><span class="g">&lt;LF&gt;&lt;CR&gt;</span>
<span class="g">&lt;LF&gt;</span>
<span class="r">Send Feature Frame Success</span><span class="g">&lt;CR&gt;&lt;LF&gt;</span>
<span class="g">&lt;CR&gt;&lt;LF&gt;</span>
<span class="r">Driver Version: 2.11.0.90</span><span class="g">&lt;CR&gt;&lt;LF&gt;</span>
<span class="g">&lt;CR&gt;&lt;LF&gt;</span>
<span class="r">Firmware Vers</span><span class="g">&lt;LF&gt;</span>
<span class="r"> Local diaddress = evice addres58:3B:C2:46s = 58:3B:C2::46:35:12</span><span class="g">&lt;CR&gt;&lt;LF&gt;</span>
<span class="r"> Setting the Local IRK Value</span><span class="g">&lt;CR&gt;&lt;LF&gt;</span>
<span class="r">Max supported Adv Data length is 251 </span><span class="g">&lt;LF&gt;</span>
<span class="r">Max number of supported Adv sets are 2  </span><span class="g">&lt;LF&gt;</span>
<span class="r">Setting AE params of set 1 successful and selected TX Power is 0 dbm </span><span class="g">&lt;LF&gt;</span>
<span class="r">Setting AE params of set 2 successful and selected TX Power is 6 dbm </span><span class="g">&lt;LF&gt;</span>
<span class="r">set ae adv data for set 1 success </span><span class="g">&lt;LF&gt;</span>
<span class="r">set ae scan resp data for set 1 success </span><span class="g">&lt;LF&gt;</span>
<span class="r">set ae adv data for set 2 success </span><span class="g">&lt;LF&gt;</span>
<span class="r">set ae scan resp data for set 2 success </span><span class="g">&lt;LF&gt;</span>
<span class="r">set ae set random address successful </span><span class="g">&lt;LF&gt;</span>
<span class="r">set 1 ae adv enable success </span><span class="g">&lt;LF&gt;</span>
<span class="r">set 2 ae adv enable success </span><span class="g">&lt;LF&gt;</span>
<span class="r"> </span><span class="g">&lt;LF&gt;</span>
<span class="r"> set ae scan params success </span><span class="g">&lt;LF&gt;</span>
<span class="r"> </span><span class="g">&lt;LF&gt;</span>
<span class="r"> set ae scan enable success </span><span class="g">&lt;LF&gt;&lt;CR&gt;</span>
<span class="g">&lt;LF&gt;</span>
<span class="r">Scan Success</span><span class="g">&lt;CR&gt;&lt;LF&gt;</span>
<span class="g">&lt;CR&gt;&lt;LF&gt;</span>
<span class="r">Wi-Fi Connecting...</span><span class="g">&lt;CR&gt;&lt;LF&gt;</span>
<span class="g">&lt;CR&gt;&lt;LF&gt;</span>
<span class="r">WLAN connected</span><span class="g">&lt;CR&gt;&lt;LF&gt;</span>
<span class="g">&lt;CR&gt;&lt;LF&gt;</span>
<span class="r">IP Config Success</span><span class="g">&lt;CR&gt;&lt;LF&gt;</span>
<span class="g">&lt;CR&gt;&lt;LF&gt;</span>
<span class="r">RSI_STA IP ADDR: 192.168.70.107 </span><span class="g">&lt;CR&gt;&lt;LF&gt;</span>
<span class="g">&lt;CR&gt;&lt;LF&gt;</span>
<span class="r"> Initializing WLAN radio and supplicant parameters. </span><span class="g">&lt;CR&gt;&lt;LF&gt;</span>
<span class="g">&lt;CR&gt;&lt;LF&gt;</span>
<span class="r"> Initiate module in to power save </span><span class="g">&lt;CR&gt;&lt;LF&gt;</span>
<span class="g">&lt;CR&gt;&lt;LF&gt;</span>
<span class="r"> Module is in power save </span><span class="g">&lt;CR&gt;&lt;LF&gt;</span></div><div class="a" style="left:633px;top:511px;width:1px;height:15px;background:#000"></div><div class="a" style="left:948px;top:562px;width:4px;height:4px;border-radius:2px;background:#e00000"></div><div class="a" style="left:407px;top:855px;width:1510px;height:182px;background:#fff;border:1px solid #696969"></div><div class="a" style="left:406px;top:835px;width:94px;height:20px;background:#a0a0a0"></div><div class="a" style="left:407px;top:836px;width:93px;height:19px;background:#696969"></div><div class="a" style="left:500px;top:835px;width:1px;height:20px;background:#fff"></div><div class="a" style="left:499px;top:836px;width:1px;height:19px;background:#e3e3e3"></div><div class="a" style="left:408px;top:837px;width:91px;height:18px;background:repeating-conic-gradient(#fff 0 25%,#ebebeb 0 50%) 0 0/2px 2px"></div><div class="a" style="left:505px;top:835px;width:1px;height:20px;background:#a0a0a0"></div><div class="a" style="left:565px;top:835px;width:1px;height:20px;background:#a0a0a0"></div><div class="t" id="doc" style="left:412.60px;top:841px;letter-spacing:0.250px;">Documentation</div><div class="t" id="script" style="left:516.00px;top:840px;letter-spacing:-0.040px;">Script</div><svg class="a" style="left:1798px;top:835px" width="15" height="17"><path d="M3.15 7V5a4 4 0 0 1 8 0V7" stroke="#8e8e8e" stroke-width="2.2" fill="none"/><path d="M3.15 7V5a4 4 0 0 1 8 0V7" stroke="#d4d4d4" stroke-width="0.8" fill="none"/><rect x="0.5" y="6.5" width="13" height="9" rx="1.2" fill="#f6f4dc" stroke="#8c8c8c"/><rect x="1.5" y="8" width="11" height="1.5" fill="#c4c4c4"/><rect x="1" y="10" width="12" height="3" fill="#e48a10"/><rect x="1.5" y="11" width="11" height="1" fill="#f8dc10"/><rect x="1" y="13" width="12" height="2" fill="#fbfbf6"/></svg><div class="t" id="about" style="left:1816.20px;top:837px;letter-spacing:0.167px;">About project</div><div class="t" style="left:1905px;top:838px;font-size:16px;-webkit-text-stroke:0.35px #000">v</div><div class="a" style="left:1905px;top:849px;width:8px;height:1px;background:#000"></div><div class="t" id="click" style="left:408.50px;top:859px;letter-spacing:0.174px;">(Click Lock symbol to allow editing and add documentation here)</div></body></html>
